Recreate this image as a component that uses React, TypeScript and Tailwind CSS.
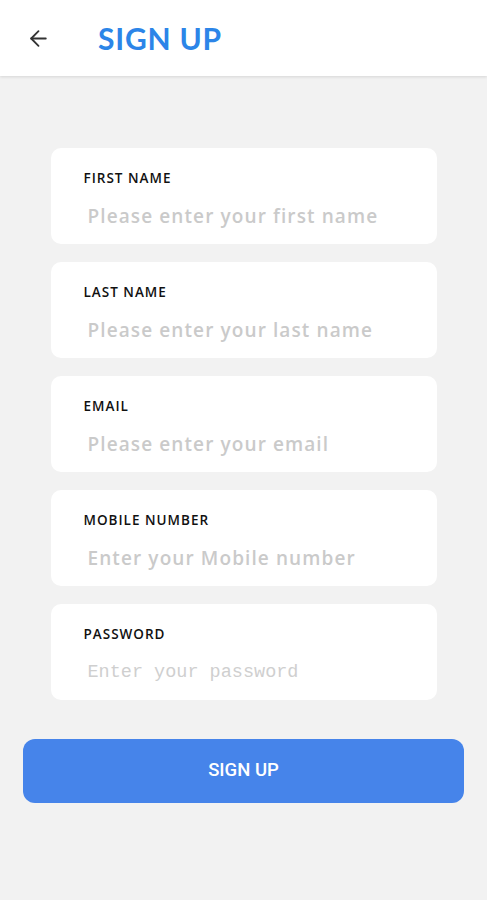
import { ArrowLeft } from "lucide-react";

const fields = [
  { label: "FIRST NAME", placeholder: "Please enter your first name" },
  { label: "LAST NAME", placeholder: "Please enter your last name" },
  { label: "EMAIL", placeholder: "Please enter your email" },
  { label: "MOBILE NUMBER", placeholder: "Enter your Mobile number" },
  { label: "PASSWORD", placeholder: "Enter your password", secret: true },
];

export default function App() {
  return (
    <div className="min-h-[900px] bg-[#f2f2f2] font-['Open_Sans',sans-serif]">
      {/* Header */}
      <div className="h-[76px] bg-white flex items-center shadow-[0_1px_3px_rgba(0,0,0,0.12)]">
        <ArrowLeft className="ml-[26px] w-[25px] h-[25px] text-[#333]" strokeWidth={1.75} />
        <h1 className="ml-[47px] text-[30px] font-bold tracking-[0.8px] text-[#2c85e8] font-['Lato',sans-serif]">
          SIGN UP
        </h1>
      </div>

      {/* Form */}
      <div className="pt-[72px] flex flex-col items-center gap-[18px]">
        {fields.map((f) => (
          <div
            key={f.label}
            className="w-[386px] h-[96px] bg-white rounded-[10px] pl-[33px] pt-[22px]"
          >
            <div className="text-[13.5px] font-semibold tracking-[1px] text-[#111] leading-[16px]">
              {f.label}
            </div>
            {f.secret ? (
              <input
                type="text"
                placeholder={f.placeholder}
                className="mt-[17px] ml-[4px] w-[330px] text-[18.5px] font-['Liberation_Mono',monospace] placeholder:text-[#cfcfcf] outline-none bg-transparent"
              />
            ) : (
              <input
                type="text"
                placeholder={f.placeholder}
                className="mt-[16px] ml-[4px] w-[340px] text-[19px] font-semibold tracking-[1.1px] placeholder:text-[#cacaca] outline-none bg-transparent"
              />
            )}
          </div>
        ))}
      </div>

      <div className="px-[23px] pt-[39px]">
        <button className="w-full h-[64px] rounded-[12px] bg-[#4684ea] text-white text-[18.5px] font-medium font-['Roboto',sans-serif]">
          SIGN UP
        </button>
      </div>
    </div>
  );
}
